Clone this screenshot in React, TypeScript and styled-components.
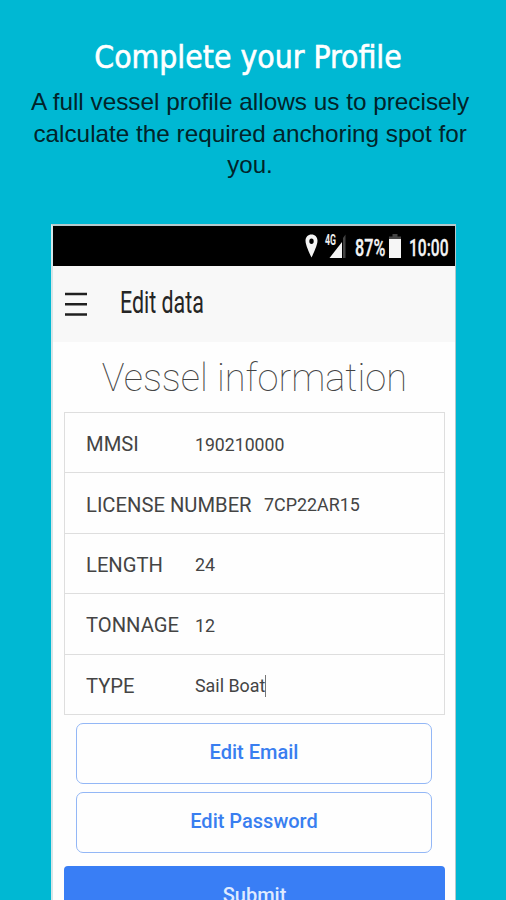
import React from "react";
import styled, { createGlobalStyle } from "styled-components";

const GlobalStyle = createGlobalStyle`
  *, *::before, *::after { box-sizing: border-box; }
  body { margin: 0; background: #00b8d3; overflow: hidden; }
`;

const Page = styled.main`
  width: 506px;
  height: 900px;
  overflow: hidden;
  display: flex;
  flex-direction: column;
  background: #00b8d3;
  font-family: Roboto, sans-serif;
`;

const Intro = styled.header`
  height: 224px;
  flex: none;
  padding-top: 36px;
  display: flex;
  flex-direction: column;
  align-items: center;
  text-align: center;
`;

const Stretch = styled.span<{ $x: number; $origin?: string }>`
  display: inline-block;
  white-space: nowrap;
  transform: scaleX(${(p) => p.$x});
  transform-origin: ${(p) => p.$origin ?? "left"} center;
`;

const Headline = styled.h1`
  margin: 0 0 0 -9px;
  font: 400 32.5px/42px "DejaVu Sans Condensed", "DejaVu Sans", sans-serif;
  font-stretch: condensed;
  color: #fff;
  -webkit-text-stroke: 0.6px #fff;
`;

const Lead = styled.p`
  margin: 8px 0 0 -6px;
  font: 400 24px/31.5px "Liberation Sans", Arial, sans-serif;
  color: #02242a;
`;

const Line = styled.span`
  display: block;
`;

const Phone = styled.section`
  width: 405px;
  height: 680px;
  flex: none;
  margin-left: 51px;
  border: solid #b5c9cc;
  border-width: 2px 1px 0 2px;
  border-left-color: #d5e6e8;
  background: #fefefe;
  display: flex;
  flex-direction: column;
`;

const StatusBar = styled.div`
  height: 40px;
  flex: none;
  background: #000;
  color: #f4f4f4;
  display: flex;
  align-items: center;
  justify-content: flex-end;
  padding-right: 7px;
  font-size: 24px;
  font-weight: 500;
  -webkit-text-stroke: 0.3px #f4f4f4;
`;

const StatusText = styled.span<{ $w: number }>`
  width: ${(p) => p.$w}px;
  line-height: 40px;
  padding-top: 2px;
  height: 40px;
`;

const StatusIcons = styled.svg`
  width: 50px;
  height: 40px;
  flex: none;
`;

const Battery = styled.svg`
  width: 12px;
  height: 40px;
  flex: none;
  margin-right: 8px;
`;

const AppBar = styled.div`
  height: 76px;
  flex: none;
  background: #f8f8f8;
  display: flex;
  align-items: center;
  padding-left: 11.5px;
  font-size: 31px;
  color: #252525;
`;

const Menu = styled.svg`
  width: 22px;
  height: 24px;
  margin-right: 33.5px;
`;

const AppTitle = styled.span`
  line-height: 40px;
  padding-bottom: 2px;
`;

const Content = styled.div`
  padding: 0 10px 0 11px;
  display: flex;
  flex-direction: column;
`;

const SectionTitle = styled.h2`
  height: 70px;
  margin: 0 1px 0 0;
  font-size: 39.5px;
  font-weight: 100;
  line-height: 72px;
  color: #444;
  text-align: center;
`;

const Table = styled.div`
  border: 1px solid #dedede;
  border-width: 1px 1px 0;
`;

const Row = styled.div`
  height: 60.4px;
  border-bottom: 1px solid #dedede;
  display: flex;
  align-items: center;
  padding: 3px 0 0 20.5px;
  color: #444;
`;

const Label = styled.span<{ $w: number }>`
  width: ${(p) => p.$w}px;
  flex: none;
  font-size: 20px;
`;

const Value = styled.span`
  font-size: 19px;
  display: flex;
  align-items: center;
`;

const Caret = styled.i<{ $x: number }>`
  width: 1px;
  height: 22px;
  margin-left: ${(p) => p.$x}px;
  background: #777;
`;

const Button = styled.button<{ $solid?: boolean }>`
  font-family: inherit;
  font-size: 20px;
  font-weight: 500;
  height: 61px;
  margin: ${(p) => (p.$solid ? "13px 0 0" : "8px 13px 0 12px")};
  padding: 0 0 ${(p) => (p.$solid ? 2 : 3)}px;
  border-radius: ${(p) => (p.$solid ? 4 : 7)}px;
  border: ${(p) => (p.$solid ? "0" : "1.5px solid #93b7f6")};
  background: ${(p) => (p.$solid ? "#397ef5" : "#fefefe")};
  color: ${(p) => (p.$solid ? "#dfeaff" : "#397ef0")};
`;

const rows = [
  { label: "MMSI", value: "190210000", w: 109, vx: 0.93 },
  { label: "LICENSE NUMBER", value: "7CP22AR15", w: 178, vx: 0.94 },
  { label: "LENGTH", value: "24", w: 109, vx: 0.94 },
  { label: "TONNAGE", value: "12", w: 109, vx: 0.94 },
  { label: "TYPE", value: "Sail Boat", w: 109, vx: 0.94, caret: -4 },
];

export default function App() {
  return (
    <Page>
      <GlobalStyle />
      <Intro>
        <Headline><Stretch $x={0.973} $origin="center">Complete your Profile</Stretch></Headline>
        <Lead>
          <Line><Stretch $x={1.014} $origin="center">A full vessel profile allows us to precisely</Stretch></Line>
          <Line><Stretch $x={1.012} $origin="center">calculate the required anchoring spot for</Stretch></Line>
          <Line>you.</Line>
        </Lead>
      </Intro>
      <Phone>
        <StatusBar>
          <StatusIcons viewBox="0 0 50 40">
            <path fill="#f4f4f4" fillRule="evenodd" d="M6.500 8.500c-3.600 0-6 2.700-6 6.200 0 5 6 16.800 6 16.800s6-11.800 6-16.800c0-3.500-2.400-6.200-6-6.200zm0 4a2.200 2.700 0 1 1 0 5.400 2.200 2.700 0 0 1 0-5.400z" />
            <path fill="#f4f4f4" d="M24.500 32L37 16V32z" />
            <path fill="#444" d="M38 12l2.500-3.500V32H38z" />
            <text x="20" y="18.500" fontSize="14" fontWeight="700" fill="#eee" textLength="11" lengthAdjust="spacingAndGlyphs">4G</text>
          </StatusIcons>
          <StatusText $w={34}><Stretch $x={0.675}>87%</Stretch></StatusText>
          <Battery viewBox="0 0 12 40">
            <path fill="#444" d="M3.500 8h5v2.500H12V14H0v-3.500h3.500z" />
            <path fill="#f6f6f6" d="M0 13h12v19H0z" />
          </Battery>
          <StatusText $w={39}><Stretch $x={0.65}>10:00</Stretch></StatusText>
        </StatusBar>
        <AppBar>
          <Menu viewBox="0 0 22 24">
            <path d="M0 2h22M0 12.250h22M0 22.500h22" stroke="#202020" strokeWidth="2.400" />
          </Menu>
          <AppTitle><Stretch $x={0.69}>Edit data</Stretch></AppTitle>
        </AppBar>
        <Content>
          <SectionTitle><Stretch $x={0.963} $origin="center">Vessel information</Stretch></SectionTitle>
          <Table>
            {rows.map((r) => (
              <Row key={r.label}>
                <Label $w={r.w}><Stretch $x={1.01}>{r.label}</Stretch></Label>
                <Value>
                  <Stretch $x={r.vx}>{r.value}</Stretch>
                  {r.caret !== undefined && <Caret $x={r.caret} />}
                </Value>
              </Row>
            ))}
          </Table>
          <Button>Edit Email</Button>
          <Button>Edit Password</Button>
          <Button $solid>Submit</Button>
        </Content>
      </Phone>
    </Page>
  );
}
